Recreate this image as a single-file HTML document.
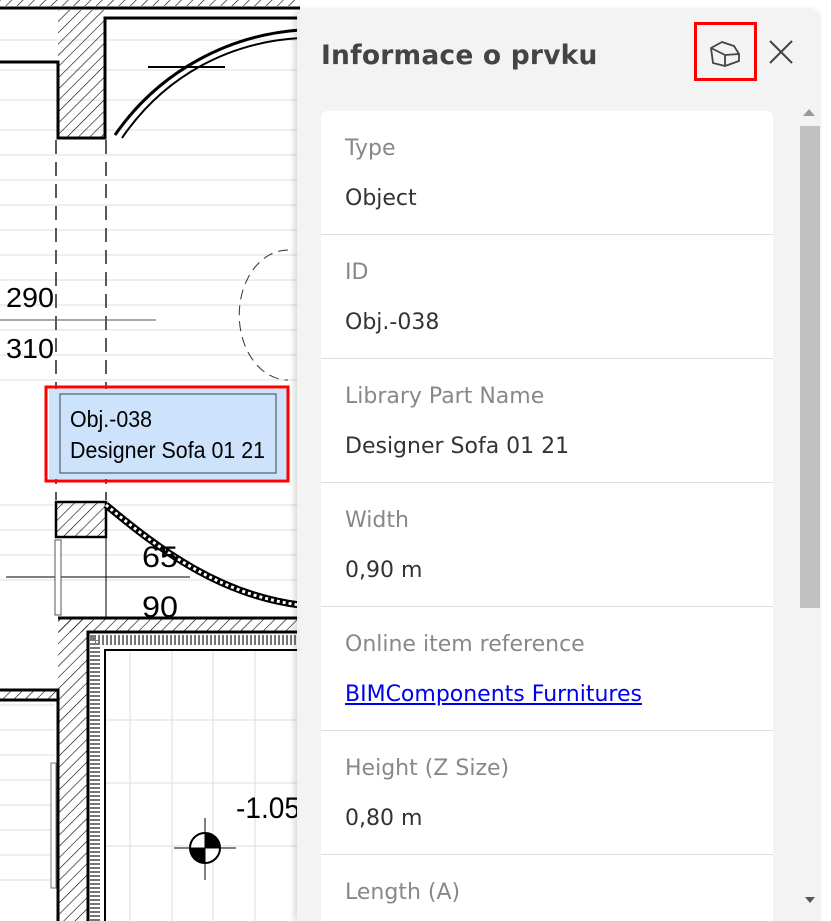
<!DOCTYPE html>
<html><head><meta charset="utf-8"><style>
html,body{margin:0;width:831px;height:921px;overflow:hidden}
body{background:#fff;font-family:"DejaVu Sans","Liberation Sans",sans-serif;position:relative}
#plan{position:absolute;left:0;top:0}
.panel{position:absolute;left:297px;top:10px;width:524px;height:911px;overflow:hidden;background:rgba(242,242,242,0.96);border-radius:8px 8px 0 0;box-shadow:-3px 0 6px rgba(0,0,0,0.15)}
.title{position:absolute;left:24px;top:30px;font-size:26.5px;font-weight:bold;color:#444;letter-spacing:0.2px}
.card{position:absolute;left:24px;top:101px;width:452px;height:820px;background:#fff;border-radius:6px;overflow:hidden}
.row{height:124px;border-bottom:1px solid #ddd;padding-left:24px;box-sizing:border-box}
.lab{padding-top:25px;font-size:22px;color:#888;line-height:26px}
.val{padding-top:24px;font-size:22px;color:#333;line-height:26px}
a{color:#0000ee}
.sb{position:absolute;left:503px;top:116px;width:20px;height:482px;background:#c1c1c1}
text{font-family:"Liberation Sans",sans-serif}
</style></head><body>
<svg id="plan" width="831" height="921" viewBox="0 0 831 921">
<defs><pattern id="h" width="8" height="8" patternUnits="userSpaceOnUse" patternTransform="rotate(45)"><line x1="0" y1="0" x2="0" y2="8" stroke="#000" stroke-width="1.2"/></pattern></defs>
<g stroke="#ddd" stroke-width="1">
<line x1="0" y1="40" x2="300" y2="40"/><line x1="0" y1="70" x2="300" y2="70"/><line x1="0" y1="100" x2="300" y2="100"/><line x1="0" y1="130" x2="300" y2="130"/><line x1="0" y1="155" x2="300" y2="155"/><line x1="0" y1="180" x2="300" y2="180"/><line x1="0" y1="205" x2="300" y2="205"/><line x1="0" y1="230" x2="300" y2="230"/><line x1="0" y1="255" x2="300" y2="255"/><line x1="0" y1="280" x2="300" y2="280"/><line x1="0" y1="305" x2="300" y2="305"/><line x1="0" y1="330" x2="300" y2="330"/><line x1="0" y1="355" x2="300" y2="355"/><line x1="0" y1="380" x2="300" y2="380"/><line x1="0" y1="505" x2="300" y2="505"/><line x1="0" y1="530" x2="300" y2="530"/><line x1="0" y1="555" x2="300" y2="555"/><line x1="0" y1="580" x2="300" y2="580"/><line x1="0" y1="705" x2="55" y2="705"/><line x1="0" y1="730" x2="55" y2="730"/><line x1="0" y1="755" x2="55" y2="755"/><line x1="0" y1="780" x2="55" y2="780"/><line x1="0" y1="805" x2="55" y2="805"/><line x1="0" y1="830" x2="55" y2="830"/><line x1="0" y1="855" x2="55" y2="855"/><line x1="0" y1="880" x2="55" y2="880"/>
<line x1="130" y1="650" x2="130" y2="921"/><line x1="172" y1="650" x2="172" y2="921"/><line x1="213" y1="650" x2="213" y2="921"/><line x1="255" y1="650" x2="255" y2="921"/>
<line x1="105" y1="720" x2="300" y2="720"/><line x1="105" y1="783" x2="300" y2="783"/><line x1="105" y1="846" x2="300" y2="846"/>
</g>
<rect x="0" y="0" width="300" height="6" fill="url(#h)"/>
<path d="M0 8H300M0 62H58V138H105V18H300" fill="none" stroke="#000" stroke-width="3"/>
<path d="M58 10H105V138H58Z" fill="url(#h)"/>
<path d="M58 64V138H105V128" fill="none" stroke="#000" stroke-width="3"/>
<path d="M115 135C160 70 230 35 300 30" fill="none" stroke="#000" stroke-width="3"/>
<path d="M122 138C165 75 230 42 300 38" fill="none" stroke="#000" stroke-width="2"/>
<line x1="148" y1="67" x2="225" y2="67" stroke="#000" stroke-width="2"/>
<g stroke="#000" stroke-dasharray="14,8" stroke-width="1.3"><line x1="56" y1="140" x2="56" y2="500"/><line x1="106" y1="140" x2="106" y2="500"/></g>
<line x1="0" y1="320" x2="156" y2="320" stroke="#555"/>
<text x="6" y="307" font-size="28" textLength="48" lengthAdjust="spacingAndGlyphs">290</text>
<text x="6" y="358" font-size="28" textLength="48" lengthAdjust="spacingAndGlyphs">310</text>
<path d="M288 250A45 60 0 0 0 288 380" fill="none" stroke="#333" stroke-dasharray="10,6"/>
<rect x="56" y="502" width="50" height="35" fill="url(#h)" stroke="#000" stroke-width="2.5"/>
<path d="M106 505C160 550 220 595 300 605" fill="none" stroke="#000" stroke-width="7"/>
<path d="M106 505C160 550 220 595 300 605" fill="none" stroke="#fff" stroke-width="3" stroke-dasharray="3,3"/>
<line x1="6" y1="577" x2="190" y2="577" stroke="#000"/>
<line x1="106" y1="537" x2="106" y2="617" stroke="#000"/>
<rect x="55" y="540" width="6" height="75" fill="#fff" stroke="#555"/>
<text x="142" y="567" font-size="30" textLength="36" lengthAdjust="spacingAndGlyphs">65</text>
<text x="142" y="617" font-size="30" textLength="36" lengthAdjust="spacingAndGlyphs">90</text>
<rect x="58" y="618" width="242" height="14" fill="url(#h)"/>
<rect x="58" y="618" width="30" height="303" fill="url(#h)"/>
<rect x="0" y="690" width="58" height="10" fill="url(#h)"/>
<path d="M0 690H58V921M0 700H58M58 618H300M88 921V632H300" fill="none" stroke="#000" stroke-width="3"/>
<path d="M95 921V640H300" fill="none" stroke="#777" stroke-width="10" stroke-dasharray="2,2"/>
<path d="M105 921V650H300" fill="none" stroke="#000" stroke-width="2"/>
<rect x="51" y="763" width="5" height="125" fill="#fff" stroke="#777"/>
<text x="236" y="818" font-size="30" textLength="64" lengthAdjust="spacingAndGlyphs">-1.05</text>
<circle cx="205" cy="848" r="15" fill="#fff" stroke="#000" stroke-width="2"/>
<path d="M205 848V833A15 15 0 0 1 220 848ZM205 848V863A15 15 0 0 1 190 848Z" fill="#000"/>
<line x1="174" y1="848" x2="236" y2="848" stroke="#000"/><line x1="205" y1="818" x2="205" y2="880" stroke="#000"/>
<rect x="49" y="389" width="238" height="90" fill="#cde2fb"/>
<rect x="60" y="394" width="216" height="79" fill="none" stroke="#345" stroke-width="1"/>
<text x="70" y="427" font-size="23" textLength="82" lengthAdjust="spacingAndGlyphs">Obj.-038</text>
<text x="70" y="458" font-size="23" textLength="195" lengthAdjust="spacingAndGlyphs">Designer Sofa 01 21</text>
<rect x="46" y="387" width="242" height="94" fill="none" stroke="#f00" stroke-width="3"/>
</svg>
<div class="panel">
<div class="title">Informace o prvku</div>
<div style="position:absolute;left:397px;top:12px;width:63px;height:59px;border:3px solid #f00;box-sizing:border-box"></div>
<svg style="position:absolute;left:411px;top:27px" width="34" height="34" viewBox="0 0 34 34" fill="none" stroke="#444" stroke-width="1.8" stroke-linejoin="round"><path d="M3 11L14 5L26 9L31 17L31 24L17 29L5 26L3 11Z M3 11L17 18L31 17 M17 18V29"/></svg>
<svg style="position:absolute;left:471px;top:29px" width="26" height="26" viewBox="0 0 26 26" stroke="#444" stroke-width="2"><path d="M2 2L24 24M24 2L2 24"/></svg>
<div class="card">
<div class="row"><div class="lab">Type</div><div class="val">Object</div></div>
<div class="row"><div class="lab">ID</div><div class="val">Obj.-038</div></div>
<div class="row"><div class="lab">Library Part Name</div><div class="val">Designer Sofa 01 21</div></div>
<div class="row"><div class="lab">Width</div><div class="val">0,90 m</div></div>
<div class="row"><div class="lab">Online item reference</div><div class="val"><a href="#">BIMComponents Furnitures</a></div></div>
<div class="row"><div class="lab">Height (Z Size)</div><div class="val">0,80 m</div></div>
<div class="row"><div class="lab">Length (A)</div></div>
</div>
<div style="position:absolute;left:506px;top:99px;width:0;height:0;border-left:6px solid transparent;border-right:6px solid transparent;border-bottom:7px solid #999"></div>
<div class="sb"></div>
<div style="position:absolute;left:508px;top:887px;width:0;height:0;border-left:5px solid transparent;border-right:5px solid transparent;border-top:6px solid #555"></div>
</div>
</body></html>
